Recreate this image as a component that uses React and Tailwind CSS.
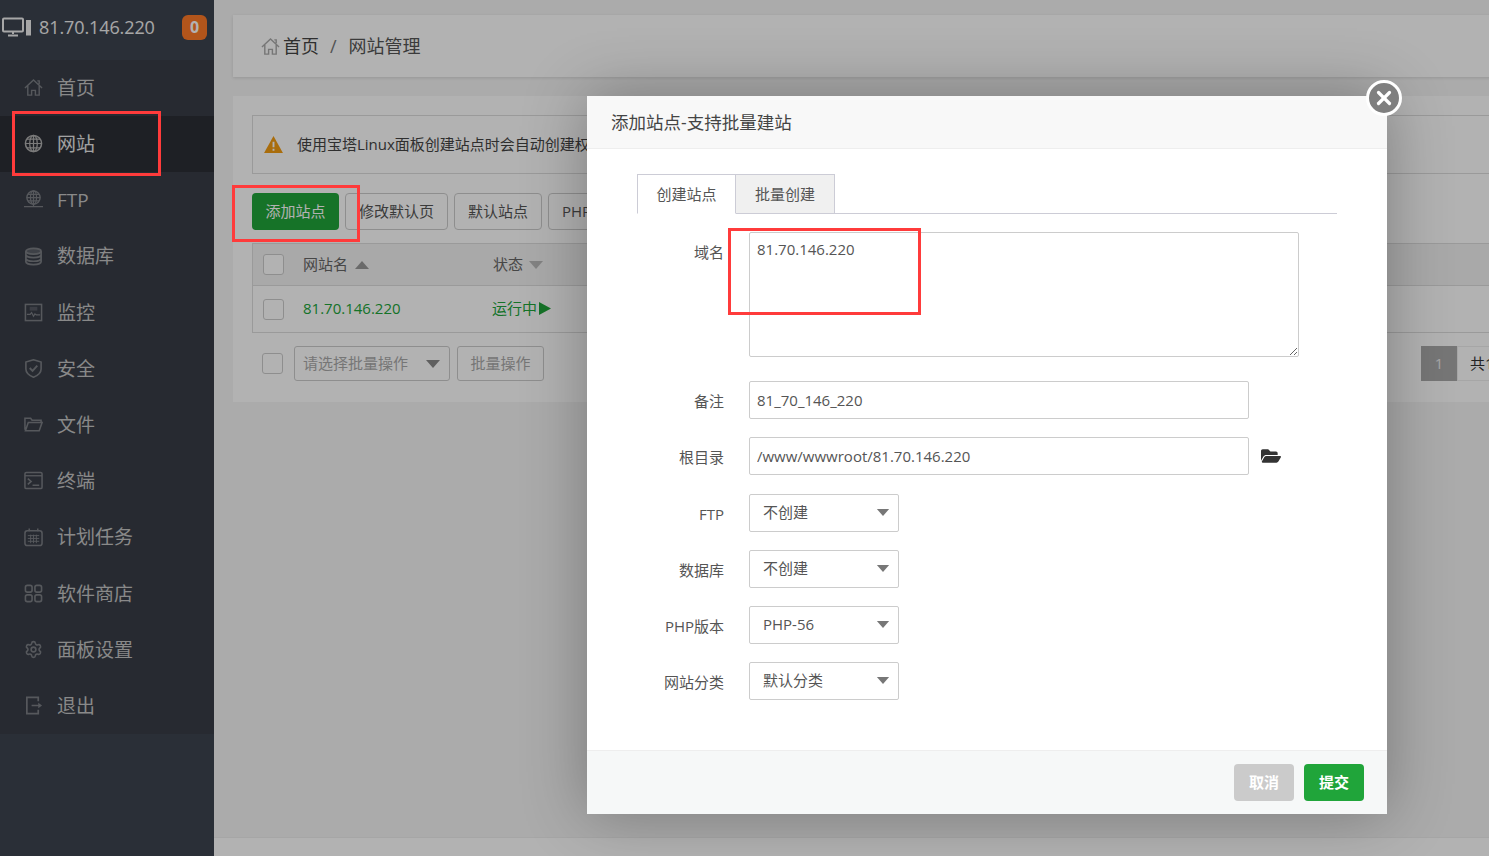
import { FaFolderOpen } from "react-icons/fa";
import { Settings, X } from "lucide-react";

const font = { fontFamily: '"Open Sans", "Noto Sans CJK SC", sans-serif' };

function HomeIcon(props) {
  return (
    <svg viewBox="0 0 20 20" fill="none" stroke="currentColor" strokeWidth="1.5" {...props}>
      <path d="M1 10.5L10 2l9 8.5M4 8.5V18h4v-5h4v5h4V8.5M14 3h2v3.5" />
    </svg>
  );
}

function GlobeIcon(props) {
  return (
    <svg viewBox="0 0 20 20" fill="none" stroke="currentColor" strokeWidth="1.3" {...props}>
      <circle cx="10" cy="10" r="8.5" strokeWidth="1.6" />
      <ellipse cx="10" cy="10" rx="4" ry="8.5" />
      <path d="M10 1.5v17M1.5 10h17M3 5.5h14M3 14.5h14" />
    </svg>
  );
}

function FtpIcon(props) {
  return (
    <svg viewBox="0 0 20 20" fill="none" stroke="currentColor" strokeWidth="1.3" {...props}>
      <circle cx="10" cy="8" r="7" strokeWidth="1.5" />
      <ellipse cx="10" cy="8" rx="3.2" ry="7" />
      <path d="M10 1v14M3 8h14M4 4.5h12M4 11.5h12M0 17.5h20M10 15v2.5" />
    </svg>
  );
}

function DatabaseIcon(props) {
  return (
    <svg viewBox="0 0 20 20" fill="none" stroke="currentColor" strokeWidth="1.8" {...props}>
      <ellipse cx="10" cy="4.5" rx="8" ry="3" fill="currentColor" fillOpacity="0.5" />
      <path d="M2 4.5v11c0 1.7 3.6 3 8 3s8-1.3 8-3v-11M2 8.2c0 1.7 3.6 3 8 3s8-1.3 8-3M2 12c0 1.7 3.6 3 8 3s8-1.3 8-3" />
    </svg>
  );
}

function MonitorIcon(props) {
  return (
    <svg viewBox="0 0 20 20" fill="none" stroke="currentColor" strokeWidth="1.6" {...props}>
      <rect x="1.5" y="1.5" width="17" height="17" />
      <rect x="6" y="4" width="8" height="4" fill="currentColor" fillOpacity="0.45" stroke="none" />
      <path d="M3 12h3.5l1.5-2 2 4 1.5-2.5 1.5 1H17" strokeWidth="1.2" />
    </svg>
  );
}

function ShieldIcon(props) {
  return (
    <svg viewBox="0 0 20 20" fill="none" stroke="currentColor" strokeWidth="1.7" {...props}>
      <path d="M10 0.8l8 2.4v7.3c0 4-3.4 6.8-8 8.7-4.6-1.9-8-4.7-8-8.7V3.2z" />
      <path d="M6 9.5l3 3 5-5.5" strokeWidth="2" />
    </svg>
  );
}

function FolderIcon(props) {
  return (
    <svg viewBox="0 0 20 20" fill="none" stroke="currentColor" strokeWidth="1.6" {...props}>
      <path d="M1 15.5V3.5h6l1.5 2H18v2.5M1.5 16.5h14.5L19 8H4.500z" />
    </svg>
  );
}

function TerminalIcon(props) {
  return (
    <svg viewBox="0 0 20 20" fill="none" stroke="currentColor" strokeWidth="1.6" {...props}>
      <rect x="1" y="1.500" width="18" height="17" rx="1.5" />
      <path d="M1 5h18" strokeWidth="1.4" />
      <path d="M4 8l3.500 3L4 14M9 15h7" />
    </svg>
  );
}

function CalendarIcon(props) {
  return (
    <svg viewBox="0 0 20 20" fill="none" stroke="currentColor" strokeWidth="1.6" {...props}>
      <rect x="1" y="3" width="18" height="15.500" rx="2.500" />
      <path d="M5.500 0.500v3M14.500 0.500v3" />
      <path d="M4 8h12M4 11h12M4 14h12M7 7v9M10 7v9M13 7v9" strokeWidth="1" />
    </svg>
  );
}

function GridIcon(props) {
  return (
    <svg viewBox="0 0 20 20" fill="none" stroke="currentColor" strokeWidth="1.7" {...props}>
      <rect x="1.500" y="1.500" width="7" height="7" rx="2" />
      <rect x="11.500" y="1.500" width="7" height="7" rx="2" />
      <rect x="1.500" y="11.500" width="7" height="7" rx="2" />
      <rect x="11.500" y="11.500" width="7" height="7" rx="2" />
    </svg>
  );
}

function LogoutIcon(props) {
  return (
    <svg viewBox="0 0 20 20" fill="none" stroke="currentColor" strokeWidth="1.8" {...props}>
      <path d="M15 5.500V1.500H3v17h12v-4M8 10h9" />
      <path d="M15 7l4 3-4 3z" fill="currentColor" stroke="none" />
    </svg>
  );
}

const menu = [
  { name: "首页", Icon: HomeIcon },
  { name: "网站", Icon: GlobeIcon, active: true },
  { name: "FTP", Icon: FtpIcon },
  { name: "数据库", Icon: DatabaseIcon },
  { name: "监控", Icon: MonitorIcon },
  { name: "安全", Icon: ShieldIcon },
  { name: "文件", Icon: FolderIcon },
  { name: "终端", Icon: TerminalIcon },
  { name: "计划任务", Icon: CalendarIcon },
  { name: "软件商店", Icon: GridIcon },
  { name: "面板设置", Icon: Settings },
  { name: "退出", Icon: LogoutIcon },
];

function Caret({ up, className }) {
  return (
    <svg viewBox="0 0 14 8" className={className} fill="currentColor">
      <path d={up ? "M7 0l7 8H0z" : "M0 0h14L7 8z"} />
    </svg>
  );
}

function Checkbox() {
  return <span className="block w-[21px] h-[21px] rounded-[3px] border border-[#ccc] bg-white shrink-0" />;
}

function Sidebar() {
  return (
    <aside className="w-[214px] shrink-0 bg-[#3d444f] flex flex-col">
      <div className="h-[60px] flex items-center pl-[2px] pb-[6px] text-[#f0f0f0]">
        <svg viewBox="0 0 29 20" className="w-[29px] h-[20px] shrink-0" fill="none" stroke="currentColor" strokeWidth="2">
          <rect x="1" y="1.500" width="20" height="13" rx="1" />
          <path d="M11 14v3M6 18.500h10" />
          <rect x="24" y="3" width="5" height="15.500" fill="currentColor" stroke="none" />
        </svg>
        <span className="ml-[8px] text-[18px] tracking-[-0.1px]">81.70.146.220</span>
        <span className="ml-auto mr-[7px] w-[25px] h-[25px] rounded-[6px] bg-[#ff7a28] text-white text-[16px] font-bold flex items-center justify-center">
          0
        </span>
      </div>
      <nav className="bg-[#383d47]">
        {menu.map(({ name, Icon, active }) => (
          <div
            key={name}
            className={`h-[56.2px] flex items-center pl-[24px] ${active ? "bg-[#2c2f36] text-[#e8e8e8]" : "text-[#c4c4c4]"}`}
          >
            <Icon className={`w-[19px] h-[19px] -mt-[1px] shrink-0 ${active ? "text-[#b0b0b0]" : "text-[#7c7f85]"}`} />
            <span className="ml-[14px] text-[19px]">{name}</span>
          </div>
        ))}
      </nav>
    </aside>
  );
}

function ToolButton({ children }) {
  return (
    <span className="h-[37px] px-[13px] flex items-center border border-[#ccc] rounded-[4px] bg-white text-[15px] text-[#555] whitespace-nowrap">
      {children}
    </span>
  );
}

function Content() {
  return (
    <main className="flex-1 min-w-0 bg-[#f5f5f5] flex flex-col">
      <div className="ml-[19px] mt-[15px] w-[1300px] h-[62px] bg-white shadow-[0_1px_3px_rgba(0,0,0,0.12)] flex items-center pl-[28px] text-[18px] text-[#555]">
        <HomeIcon className="w-[19px] h-[19px] text-[#aaa]" />
        <span className="ml-[3px] text-[#444]">首页</span>
        <span className="ml-[11px] mr-[12px] text-[#777]">/</span>
        <span>网站管理</span>
      </div>
      <div className="ml-[19px] mt-[19px] w-[1300px] h-[306px] bg-white px-[19px] pt-[19px]">
        <div className="h-[59px] border border-[#ddd] flex items-center pl-[11px] text-[15px] text-[#444] whitespace-nowrap">
          <svg viewBox="0 0 20 18" className="w-[19px] h-[17px]">
            <path d="M10 0l10 18H0z" fill="#f39c12" />
            <path d="M9 6h2v6H9zM9 13.500h2v2H9z" fill="#fff" />
          </svg>
          <span className="ml-[14px]">使用宝塔Linux面板创建站点时会自动创建权限配置，统一使用www用户</span>
        </div>
        <div className="mt-[19px] flex gap-[6px]">
          <span className="h-[37px] w-[87px] flex items-center justify-center rounded-[4px] bg-[#20a53a] text-white text-[15px]">添加站点</span>
          <ToolButton>修改默认页</ToolButton>
          <ToolButton>默认站点</ToolButton>
          <ToolButton>PHP命令行版本</ToolButton>
        </div>
        <div className="mt-[13px] border border-[#ddd] h-[90px]">
          <div className="h-[42px] bg-[#f2f2f2] border-b border-[#ddd] flex items-center pl-[10px] text-[15px] text-[#666]">
            <Checkbox />
            <span className="ml-[19px]">网站名</span>
            <Caret up className="ml-[7px] w-[14px] h-[8px] text-[#999]" />
            <span className="ml-[124px]">状态</span>
            <Caret className="ml-[6px] w-[14px] h-[8px] text-[#bbb]" />
          </div>
          <div className="h-[46px] flex items-center pl-[10px] text-[15px] text-[#20a53a]">
            <Checkbox />
            <span className="ml-[19px] w-[189px] pb-[2px]">81.70.146.220</span>
            <span className="pb-[2px]">运行中</span>
            <svg viewBox="0 0 12 13" className="ml-[2px] w-[12px] h-[13px] -mt-[1px]" fill="currentColor">
              <path d="M0 0l12 6.500L0 13z" />
            </svg>
          </div>
        </div>
        <div className="mt-[13px] flex items-center pl-[10px] text-[15px] text-[#aaa]">
          <Checkbox />
          <span className="ml-[11px] w-[156px] h-[35px] border border-[#ccc] rounded-[3px] flex items-center pl-[8px] pr-[9px]">
            请选择批量操作
            <Caret className="ml-auto w-[14px] h-[8px] text-[#888]" />
          </span>
          <span className="ml-[7px] w-[87px] h-[35px] border border-[#ccc] rounded-[3px] flex items-center justify-center">批量操作</span>
          <span className="ml-auto flex h-[35px] items-center">
            <span className="w-[36px] h-full bg-[#aaa] text-[#eee] flex items-center justify-center">1</span>
            <span className="w-[57px] h-full border border-[#eee] pl-[12px] flex items-center text-[#333] whitespace-nowrap">共1条</span>
          </span>
        </div>
      </div>
      <div className="mt-auto h-[19px] bg-white border-t border-[#eee]" />
    </main>
  );
}

function FormRow({ label, mt, children }) {
  return (
    <div className={`flex items-center ${mt}`}>
      <label className="w-[87px] mr-[25px] pt-[2px] text-right text-[15px] text-[#555] whitespace-nowrap">{label}</label>
      {children}
    </div>
  );
}

function SelectBox({ value }) {
  return (
    <div className="w-[150px] h-[38px] border border-[#ccc] rounded-[2px] flex items-center pl-[13px] pr-[8px] text-[15px] text-[#555]">
      <span className="pb-[2px]">{value}</span>
      <Caret className="ml-auto -mt-[2px] w-[14px] h-[7px] text-[#777]" />
    </div>
  );
}

const inputClass =
  "block border border-[#ccc] rounded-[2px] px-[7px] text-[15px] text-[#555] outline-none bg-white";

function Modal() {
  return (
    <div className="absolute left-[587px] top-[96px] w-[800px] h-[718px] bg-white flex flex-col shadow-[0_0_60px_rgba(0,0,0,0.3)]">
      <div className="h-[53px] shrink-0 bg-[#f8f8f8] border-b border-[#eee] flex items-center pl-[24px] text-[17.5px] text-[#444]">
        添加站点-支持批量建站
      </div>
      <div className="flex-1 pl-[50px] pr-[50px] pt-[25px]">
        <div className="flex h-[40px] border-b border-[#ccccd6] text-[15px] text-[#555]">
          <span className="w-[99px] h-[40px] flex items-center justify-center bg-white border border-[#ccccd6] border-b-white">创建站点</span>
          <span className="w-[99px] h-[40px] flex items-center justify-center bg-[#f0f0f0] border border-l-0 border-[#ccccd6]">批量创建</span>
        </div>
        <div className="mt-[18px] flex items-start">
          <label className="w-[87px] mr-[25px] pt-[9px] text-right text-[15px] text-[#555]">域名</label>
          <textarea className={`${inputClass} w-[550px] h-[125px] py-[5px]`} defaultValue="81.70.146.220" />
        </div>
        <FormRow label="备注" mt="mt-[24px]">
          <input className={`${inputClass} w-[500px] h-[38px]`} defaultValue="81_70_146_220" />
        </FormRow>
        <FormRow label="根目录" mt="mt-[18px]">
          <input className={`${inputClass} w-[500px] h-[38px]`} defaultValue="/www/wwwroot/81.70.146.220" />
          <FaFolderOpen className="ml-[12px] w-[20px] h-[18px] text-[#333]" />
        </FormRow>
        <FormRow label="FTP" mt="mt-[19px]"><SelectBox value="不创建" /></FormRow>
        <FormRow label="数据库" mt="mt-[18px]"><SelectBox value="不创建" /></FormRow>
        <FormRow label="PHP版本" mt="mt-[18px]"><SelectBox value="PHP-56" /></FormRow>
        <FormRow label="网站分类" mt="mt-[18px]"><SelectBox value="默认分类" /></FormRow>
      </div>
      <div className="h-[64px] shrink-0 bg-[#f6f8f8] border-t border-[#eee] flex items-center justify-end gap-[10px] pr-[23px] text-[15px] font-bold text-white">
        <span className="w-[60px] h-[37px] rounded-[4px] bg-[#cbcbcb] flex items-center justify-center">取消</span>
        <span className="w-[60px] h-[37px] rounded-[4px] bg-[#20a53a] flex items-center justify-center">提交</span>
      </div>
      <span className="absolute -top-[16px] -right-[15px] w-[36px] h-[36px] rounded-full bg-[#7f7f7f] border-[3px] border-white flex items-center justify-center">
        <X className="w-[22px] h-[22px] text-white" strokeWidth={3.5} />
      </span>
    </div>
  );
}

export default function App() {
  return (
    <div className="relative w-full h-[856px] overflow-hidden flex" style={font}>
      <Sidebar />
      <Content />
      <div className="absolute inset-0 bg-black/30" />
      <Modal />
      {/* annotation boxes drawn on the screenshot */}
      <div className="absolute left-[12px] top-[111px] w-[149px] h-[65px] border-[3px] border-[#ff3b3b]" />
      <div className="absolute left-[232px] top-[185px] w-[128px] h-[57px] border-[3px] border-[#ff3b3b]" />
      <div className="absolute left-[728px] top-[228px] w-[193px] h-[87px] border-[3px] border-[#ff3b3b]" />
    </div>
  );
}
